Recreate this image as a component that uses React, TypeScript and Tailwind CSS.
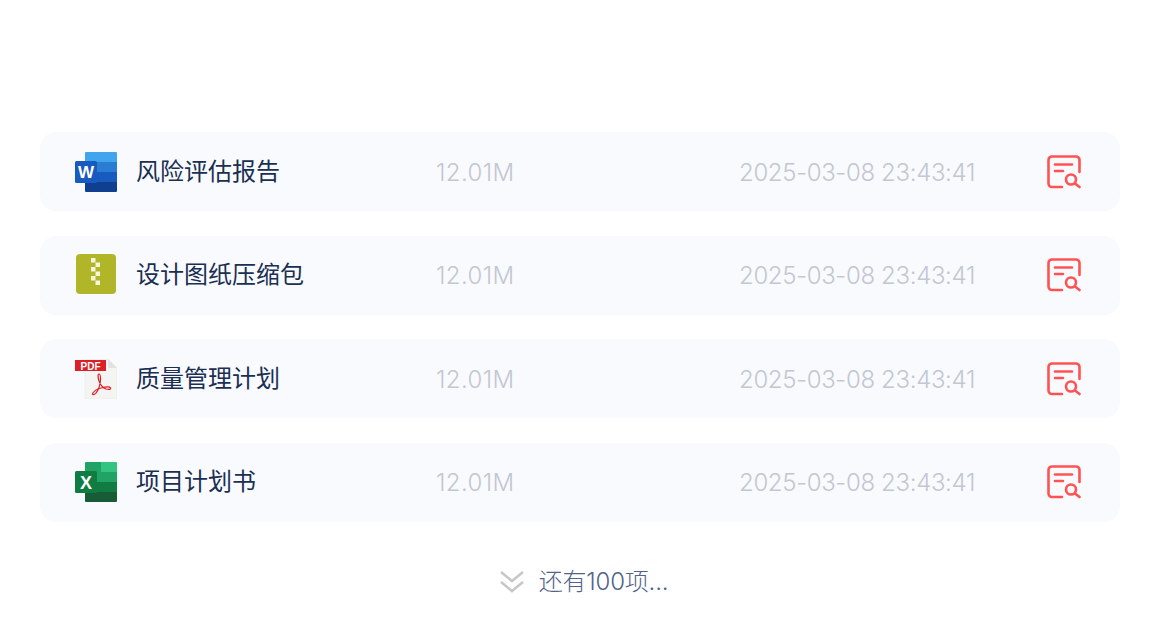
import React from 'react';

const WordIcon = () => (
    <svg width="42" height="40" viewBox="0 0 42 40" className="shrink-0">
        <path d="M10 1a1 1 0 0 1 1-1h30a1 1 0 0 1 1 1v9.750H10z" fill="#41a5ee" />
        <rect x="10" y="10" width="32" height="10" fill="#2b7cd3" />
        <rect x="10" y="20" width="32" height="10" fill="#185abd" />
        <path d="M10 30h32v9a1 1 0 0 1-1 1H11a1 1 0 0 1-1-1z" fill="#103f91" />
        <rect x="0" y="9" width="22" height="22" rx="1.500" fill="#185abd" />
        <text x="11" y="26" textAnchor="middle" fontSize="17" fontWeight="700" fill="#fff" fontFamily="'Liberation Sans', sans-serif">W</text>
    </svg>
);

const ExcelIcon = () => (
    <svg width="42" height="40" viewBox="0 0 42 40" className="shrink-0">
        <path d="M26 0h15a1 1 0 0 1 1 1v9H26z" fill="#33c481" />
        <path d="M11 0h15v10H10V1a1 1 0 0 1 1-1z" fill="#21a366" />
        <rect x="10" y="10" width="32" height="10" fill="#21a366" />
        <rect x="10" y="20" width="32" height="10" fill="#107c41" />
        <path d="M10 30h32v9a1 1 0 0 1-1 1H11a1 1 0 0 1-1-1z" fill="#185c37" />
        <rect x="0" y="9" width="22" height="22" rx="1.500" fill="#107c41" />
        <text x="11" y="26.500" textAnchor="middle" fontSize="18" fontWeight="700" fill="#fff" fontFamily="'Liberation Sans', sans-serif">X</text>
    </svg>
);

const ZipIcon = () => (
    <svg width="42" height="40" viewBox="0 0 42 40" className="shrink-0 -translate-y-px">
        <rect x="1" y="0" width="40" height="40" rx="4" fill="#b1b528" />
        <g fill="#f6f6dc">
            <rect x="16" y="4" width="4.500" height="4.500" />
            <rect x="20.500" y="8.500" width="4.500" height="4.500" />
            <rect x="16" y="13" width="4.500" height="4.500" />
            <rect x="20.500" y="17.500" width="4.500" height="4.500" />
            <rect x="16" y="22" width="4.500" height="4.500" />
            <rect x="20.500" y="26.500" width="4.500" height="4.500" />
        </g>
    </svg>
);

const PdfIcon = () => (
    <svg width="42" height="40" viewBox="0 0 42 40" className="shrink-0">
        <path d="M10 0h23l9 9v31H10z" fill="#f4f4f2" stroke="#e6e6e4" strokeWidth="0.500" />
        <path d="M33 0l9 9h-9z" fill="#e2e2e0" />
        <rect x="0" y="1" width="31" height="11" fill="#dc1f26" />
        <text x="15.500" y="10.500" textAnchor="middle" fontSize="10.500" fontWeight="700" fill="#fff" fontFamily="'Liberation Sans', sans-serif" textLength="20" lengthAdjust="spacingAndGlyphs">PDF</text>
        <path d="M24 15c-1.500 0-1 4 0 7 1.500 4 4 7 7 8 3 .8 5 .5 4.500-1-.6-1.500-5.500-1-9.500 0-3 .8-7 3-8.500 5.500-.6 1.800 2 1.500 3.500-.5 2.500-2.500 4.500-9 4.500-14 0-3-.5-5-1.500-5z" fill="none" stroke="#dc1f26" strokeWidth="1.200" />
    </svg>
);

const PreviewIcon = () => (
    <svg width="34" height="34" viewBox="0 0 34 34" fill="none" stroke="#ff5353" strokeWidth="2.600" strokeLinecap="round" strokeLinejoin="round" className="shrink-0">
        <path d="M15 32H5a3.500 3.500 0 0 1-3.500-3.500V5A3.500 3.500 0 0 1 5 1.500h24A3.500 3.500 0 0 1 32.500 5v12" />
        <path d="M8 9.500h17" />
        <path d="M8 16h8" />
        <circle cx="24" cy="24.500" r="5" />
        <path d="M28 28.500l4.500 3.500" />
    </svg>
);

const files = [
    { name: '风险评估报告', icon: <WordIcon /> },
    { name: '设计图纸压缩包', icon: <ZipIcon /> },
    { name: '质量管理计划', icon: <PdfIcon /> },
    { name: '项目计划书', icon: <ExcelIcon /> },
];

export default function App() {
    return (
        <div className="w-[1160px] h-[642px] bg-white px-10 pt-[132.200px] font-['Inter','Noto_Sans_CJK_SC',sans-serif] overflow-hidden">
            <div className="flex flex-col gap-[24.300px]">
                {files.map((file) => (
                    <div key={file.name} className="h-[79.200px] rounded-2xl bg-[#f9fafe] flex items-center pl-[35px] pr-[39px]">
                        {file.icon}
                        <p className="ml-[19px] w-[300px] text-2xl text-[#1a2f52]">{file.name}</p>
                        <p className="w-[303px] text-2xl font-light tracking-[0.400px] text-[#c2c7d1] translate-y-px">12.01M</p>
                        <p className="w-[308px] text-2xl font-light tracking-[-0.340px] text-[#c2c7d1] translate-y-px">2025-03-08 23:43:41</p>
                        <PreviewIcon />
                    </div>
                ))}
            </div>
            <div className="mt-[44px] ml-[7px] flex items-center justify-center text-2xl text-[#53648a]">
                <svg width="26" height="26" viewBox="0 0 26 26" fill="none" stroke="#c8c8c8" strokeWidth="2.600" className="mr-[14px]">
                    <path d="M2 3l11 9 11-9" />
                    <path d="M2 13l11 9 11-9" />
                </svg>
                <span className="font-light tracking-[-0.200px]">还有100项...</span>
            </div>
        </div>
    );
}
